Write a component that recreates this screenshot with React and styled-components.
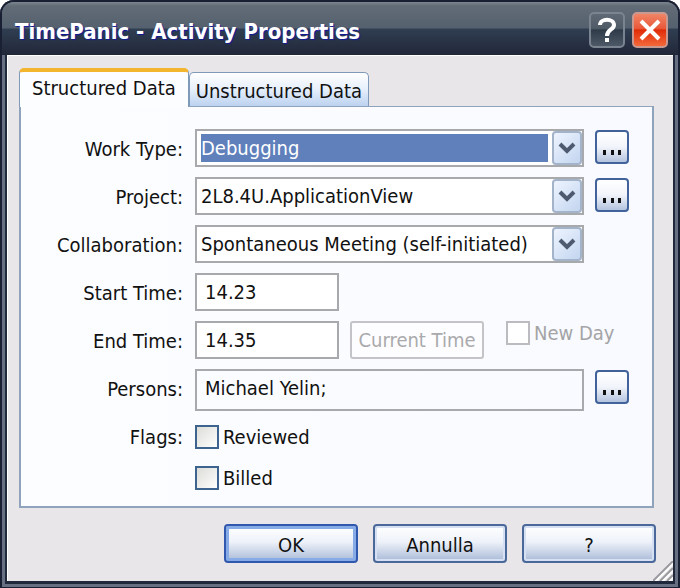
import React, { useState } from 'react'
import styled, { createGlobalStyle } from 'styled-components'

const workTypes = ['Debugging', 'Coding', 'Testing']
const projects = ['2L8.4U.ApplicationView', '2L8.4U.Core']
const collaborations = ['Spontaneous Meeting (self-initiated)', 'Scheduled Meeting', 'None']

const Combo = ({ id, options, selected }) => {
  const [value, setValue] = useState(options[0])

  return (
    <ComboBox>
      <Select id={id} $selected={selected} value={value} onChange={(e) => setValue(e.target.value)}>
        {options.map(option => <option key={option}>{option}</option>)}
      </Select>
      <Arrow aria-hidden="true">
        <svg width="18" height="14" viewBox="0 0 18 14">
          <path d="M2 3 L9 10 L16 3" fill="none" stroke="#4d5a70" strokeWidth="4" />
        </svg>
      </Arrow>
    </ComboBox>
  )
}

const Browse = ({ label }) => (
  <BrowseButton type="button" aria-label={label}>
    <svg width="20" height="5" viewBox="0 0 20 5">
      <path d="M1 0h3v5h-3z M9 0h3v5h-3z M16 0h3v5h-3z" fill="#111" />
    </svg>
  </BrowseButton>
)

const App = () => {

  const [start, setStart] = useState('14.23')
  const [end, setEnd] = useState('14.35')
  const [persons, setPersons] = useState('Michael Yelin;')

  return (
    <>
      <GlobalStyle />
      <Window>
        <TitleBar>
          <Title>TimePanic - Activity Properties</Title>
          <CaptionButton type="button" aria-label="Help">
            <svg width="20" height="26" viewBox="0 0 20 26">
              <path d="M3 8 C3 1 17 1 17 8 C17 13 10 12 10 19" fill="none" stroke="#fff" strokeWidth="4" />
              <path d="M8 21h4v4h-4z" fill="#fff" />
            </svg>
          </CaptionButton>
          <CaptionButton type="button" aria-label="Close" $close>
            <svg width="22" height="22" viewBox="0 0 22 22">
              <path d="M2 2 L20 20 M20 2 L2 20" stroke="#fff" strokeWidth="4" />
            </svg>
          </CaptionButton>
        </TitleBar>

        <Client>
          <Tabs role="tablist">
            <Tab type="button" role="tab" aria-selected="true" $active>Structured Data</Tab>
            <Tab type="button" role="tab" aria-selected="false">Unstructured Data</Tab>
          </Tabs>

          <Panel role="tabpanel">
            <Row>
              <Label htmlFor="work">Work Type:</Label>
              <Combo id="work" options={workTypes} selected />
              <Browse label="Browse work types" />
            </Row>
            <Row>
              <Label htmlFor="project">Project:</Label>
              <Combo id="project" options={projects} />
              <Browse label="Browse projects" />
            </Row>
            <Row>
              <Label htmlFor="collaboration">Collaboration:</Label>
              <Combo id="collaboration" options={collaborations} />
            </Row>
            <Row>
              <Label htmlFor="start">Start Time:</Label>
              <Field>
                <TimeInput id="start" value={start} onChange={(e) => setStart(e.target.value)} />
              </Field>
            </Row>
            <Row>
              <Label htmlFor="end">End Time:</Label>
              <WideField>
                <TimeInput id="end" value={end} onChange={(e) => setEnd(e.target.value)} />
                <CurrentTime type="button" disabled>Current Time</CurrentTime>
                <NewDay $disabled>
                  <Checkbox type="checkbox" disabled />
                  New Day
                </NewDay>
              </WideField>
            </Row>
            <Row>
              <Label htmlFor="persons">Persons:</Label>
              <PersonsInput id="persons" value={persons} onChange={(e) => setPersons(e.target.value)} />
              <Browse label="Browse persons" />
            </Row>
            <Flags role="group" aria-labelledby="flags">
              <Label as="span" id="flags">Flags:</Label>
              <FlagList>
                <CheckLabel><Checkbox type="checkbox" />Reviewed</CheckLabel>
                <CheckLabel><Checkbox type="checkbox" />Billed</CheckLabel>
              </FlagList>
            </Flags>
          </Panel>

          <Footer>
            <Button type="button" $primary>OK</Button>
            <Button type="button">Annulla</Button>
            <Button type="button">?</Button>
          </Footer>

          <Grip width="20" height="20" viewBox="0 0 20 20" aria-hidden="true">
            <path d="M2 20 L20 2 M9 20 L20 9 M16 20 L20 16" stroke="#fff" strokeWidth="3" />
            <path d="M0 20 L20 0 M7 20 L20 7 M14 20 L20 14" stroke="#9a9aa0" strokeWidth="2" />
          </Grip>
        </Client>
      </Window>
    </>
  )
}

const GlobalStyle = createGlobalStyle`
  * {
    box-sizing: border-box;
  }
  body {
    margin: 0;
    background: #fff;
    color: #111;
  }
  body, button, input, select {
    font-family: 'DejaVu Sans Condensed', 'DejaVu Sans', sans-serif;
    font-stretch: condensed;
    font-size: 20px;
    line-height: 24px;
  }
`

const Window = styled.div`
  padding: 2px 7px 8px;
  border-radius: 14px 14px 0 0;
  background: #20283b;
  box-shadow: inset 0 0 0 2px #1a2033, inset 0 0 0 5px #667082;
`

const TitleBar = styled.header`
  display: flex;
  align-items: center;
  gap: 7px;
  height: 53px;
  margin: 0 -5px;
  padding: 3px 10px 0 13px;
  border-radius: 12px 12px 0 0;
  background: linear-gradient(#7c868f 0, #616c77 4px, #55616e 26px, #303e51 27px, #212739 100%);
`

const Title = styled.h1`
  flex: 1;
  margin: 0;
  padding-top: 4px;
  font-size: 22px;
  line-height: 28px;
  color: #fff;
  text-shadow: 1px 1px 1px #10189a;
`

const CaptionButton = styled.button`
  display: grid;
  place-items: center;
  width: 36px;
  height: 36px;
  padding: 0;
  border: 2px solid ${props => props.$close ? '#c9988f' : '#7a8490'};
  border-radius: 5px;
  background: ${props => props.$close
    ? 'linear-gradient(#f08465, #e8593a 45%, #e02c08 50%, #f4683a)'
    : 'linear-gradient(#5f6975, #505b68 45%, #303b49 50%, #4d5967)'};
`

const Client = styled.main`
  position: relative;
  padding: 12px 19px 18px 11px;
  border-left: 1px solid #fff;
  border-top: 1px solid #fff;
  background: #e9e6ea;
`

const Tabs = styled.div`
  display: flex;
  align-items: flex-end;
`

const Tab = styled.button`
  position: relative;
  height: ${props => props.$active ? '39px' : '34px'};
  margin-bottom: ${props => props.$active ? '-1px' : '0'};
  padding: ${props => props.$active ? '0 12px 4px' : '2px 6px 0'};
  border: 1px solid #7f9ab8;
  border-top: ${props => props.$active ? '4px solid #f3b42e' : '1px solid #7f9ab8'};
  border-bottom: 0;
  border-radius: 5px 5px 0 0;
  color: #111;
  background: ${props => props.$active ? '#fcfdff' : 'linear-gradient(#fff, #e6effb 50%, #bcd2f0)'};
`

const Panel = styled.section`
  display: flex;
  flex-direction: column;
  gap: 10px;
  padding: 22px 23px 16px 0;
  border: 2px solid #8fa3bd;
  border-top-width: 1px;
  background: linear-gradient(90deg, #fbfdff, #f8faff);
`

const Row = styled.div`
  display: grid;
  grid-template-columns: 163px 1fr 34px;
  column-gap: 11px;
  align-items: start;
`

const Label = styled.label`
  padding: 8px 1px 0 0;
  text-align: right;
  white-space: nowrap;
`

const ComboBox = styled.div`
  display: flex;
  height: 38px;
  padding: 3px 0 3px 4px;
  border: 2px solid #a8a9ad;
  background: #fff;
`

const Select = styled.select`
  flex: 1;
  min-width: 0;
  margin-right: 4px;
  padding: 0;
  appearance: none;
  border: 0;
  outline: 0;
  color: ${props => props.$selected ? '#fff' : '#111'};
  background: ${props => props.$selected ? '#6080bc' : '#fff'};
`

const Arrow = styled.span`
  display: grid;
  place-items: center;
  width: 30px;
  margin: -3px 0;
  border: 2px solid #a3b3c9;
  border-radius: 4px;
  background: linear-gradient(135deg, #eef4fe, #c3d5f0);
  pointer-events: none;
`

const BrowseButton = styled.button`
  display: flex;
  justify-content: center;
  align-items: flex-end;
  height: 34px;
  margin-top: 1px;
  padding: 0 0 7px;
  border: 2px solid #41629a;
  border-radius: 4px;
  background: linear-gradient(#fff, #f1f4fa 50%, #b4c3de);
`

const Field = styled.div`
  display: flex;
  gap: 11px;
`

const WideField = styled(Field)`
  grid-column: 2 / 4;
`

const TimeInput = styled.input`
  width: 144px;
  height: 38px;
  padding: 0 8px;
  border: 2px solid #a8a9ad;
  background: #fff;
  color: #111;
`

const PersonsInput = styled.input`
  min-width: 0;
  height: 42px;
  padding: 0 8px 4px;
  border: 2px solid #a8a9ad;
  background: transparent;
  color: #111;
`

const CurrentTime = styled.button`
  width: 134px;
  height: 38px;
  padding: 0;
  border: 2px solid #c4c4c8;
  border-radius: 3px;
  background: #fdfdff;
  color: #aaaaac;
  white-space: nowrap;
`

const CheckLabel = styled.label`
  display: flex;
  align-items: center;
  gap: 4px;
  height: 24px;
  white-space: nowrap;
  color: ${props => props.$disabled ? '#a4a4a6' : '#111'};
`

const NewDay = styled(CheckLabel)`
  margin-left: 11px;
`

const Checkbox = styled.input`
  appearance: none;
  width: 24px;
  height: 24px;
  margin: 0;
  border: 2px solid #3c648f;
  background: linear-gradient(135deg, #dcdcd8, #fff);

  &:checked {
    background: #3c648f;
  }
  &:disabled {
    border-color: #bcbcc0;
    background: #fff;
  }
`

const Flags = styled(Row)`
  margin-top: -4px;
`

const FlagList = styled.div`
  display: flex;
  flex-direction: column;
  gap: 17px;
  padding-top: 8px;
`

const Footer = styled.footer`
  display: flex;
  justify-content: flex-end;
  gap: 15px;
  margin: 16px -2px 0 0;
`

const Button = styled.button`
  width: 134px;
  height: 39px;
  padding: 2px 0 0;
  border: 2px solid ${props => props.$primary ? '#3058ae' : '#4a6899'};
  border-radius: 4px;
  color: #111;
  background: linear-gradient(#fff, #eef2f9 45%, #a9bad8);
  box-shadow: ${props => props.$primary ? 'inset 0 0 0 3px #86abe6' : 'inset 0 0 0 2px #d5e0f2'};
`

const Grip = styled.svg`
  position: absolute;
  right: 0;
  bottom: 0;
`

export default App
